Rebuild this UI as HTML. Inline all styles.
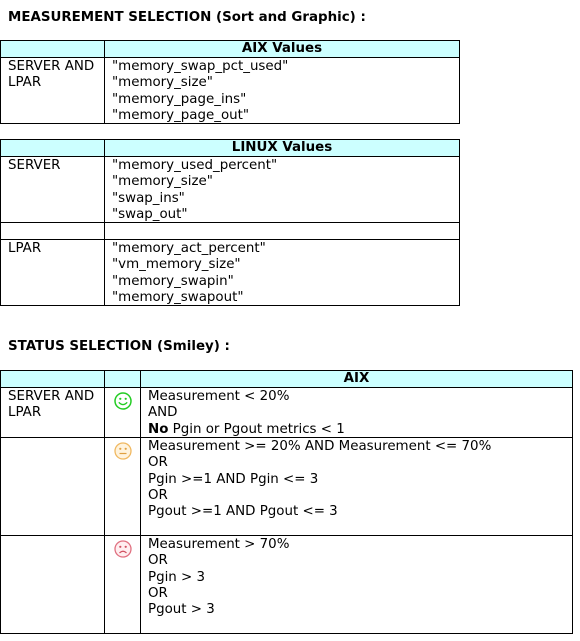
<!DOCTYPE html><html><head><meta charset="utf-8"><style>
body{margin:0;background:#fff;font-family:"DejaVu Sans","Liberation Sans",sans-serif;font-size:13.4px;color:#000;position:relative;width:580px;height:641px;overflow:hidden}
.t{position:absolute;font-weight:bold;font-size:13.4px}
table{position:absolute;border-collapse:collapse;table-layout:fixed}
td{border:1px solid #000;vertical-align:top;padding:0 0 0 7px;line-height:16.25px;white-space:nowrap;overflow:hidden}
td div{position:relative;top:1px}
tr.h td{background:#ccffff;font-weight:bold;text-align:center;height:16px;line-height:16px;padding:0}
svg{display:block;margin:3px 0 0 4px}
</style></head><body>
<div class="t" style="left:8px;top:10px">MEASUREMENT SELECTION (Sort and Graphic) :</div>
<table style="left:0;top:40px;width:460px">
<col style="width:104px"><col>
<tr class="h"><td></td><td>AIX Values</td></tr>
<tr><td style="height:64px"><div>SERVER AND<br>LPAR</div></td><td><div>"memory_swap_pct_used"<br>"memory_size"<br>"memory_page_ins"<br>"memory_page_out"</div></td></tr>
</table>
<table style="left:0;top:139px;width:460px">
<col style="width:104px"><col>
<tr class="h"><td></td><td>LINUX Values</td></tr>
<tr><td style="height:64px"><div>SERVER</div></td><td><div>"memory_used_percent"<br>"memory_size"<br>"swap_ins"<br>"swap_out"</div></td></tr>
<tr><td style="height:16px"></td><td></td></tr>
<tr><td style="height:64px"><div>LPAR</div></td><td><div>"memory_act_percent"<br>"vm_memory_size"<br>"memory_swapin"<br>"memory_swapout"</div></td></tr>
</table>
<div class="t" style="left:8px;top:339px">STATUS SELECTION (Smiley) :</div>
<table style="left:0;top:370px;width:573px">
<col style="width:104px"><col style="width:36px"><col>
<tr class="h"><td></td><td></td><td>AIX</td></tr>
<tr><td style="height:49px"><div>SERVER AND<br>LPAR</div></td><td style="padding:0"><svg width="30" height="22" viewBox="0 0 30 22"><circle cx="14" cy="10" r="8" fill="none" stroke="#22cc22" stroke-width="1.5"/><circle cx="11.3" cy="7.8" r="1.1" fill="#22cc22"/><circle cx="16.7" cy="7.8" r="1.1" fill="#22cc22"/><path d="M9.8 11.3 Q14 15.8 18.2 11.3" fill="none" stroke="#22cc22" stroke-width="1.4"/></svg></td><td><div>Measurement &lt; 20%<br>AND<br><b>No</b> Pgin or Pgout metrics &lt; 1</div></td></tr>
<tr><td style="height:97px"></td><td style="padding:0"><svg width="30" height="22" viewBox="0 0 30 22"><circle cx="14" cy="10" r="8" fill="#fff3dd" stroke="#f0b860" stroke-width="1.3"/><circle cx="11.3" cy="7.8" r="1.1" fill="#e0a040"/><circle cx="16.7" cy="7.8" r="1.1" fill="#e0a040"/><path d="M10.5 12.5 H17.5" stroke="#e0a040" stroke-width="1.2"/></svg></td><td><div>Measurement &gt;= 20% AND Measurement &lt;= 70%<br>OR<br>Pgin &gt;=1 AND Pgin &lt;= 3<br>OR<br>Pgout &gt;=1 AND Pgout &lt;= 3</div></td></tr>
<tr><td style="height:97px"></td><td style="padding:0"><svg width="30" height="22" viewBox="0 0 30 22"><circle cx="14" cy="10" r="8" fill="#ffeef0" stroke="#e07080" stroke-width="1.3"/><circle cx="11.3" cy="7.8" r="1.1" fill="#d05060"/><circle cx="16.7" cy="7.8" r="1.1" fill="#d05060"/><path d="M10.5 14 Q14 10.5 17.5 14" fill="none" stroke="#d05060" stroke-width="1.2"/></svg></td><td><div>Measurement &gt; 70%<br>OR<br>Pgin &gt; 3<br>OR<br>Pgout &gt; 3</div></td></tr>
</table>
</body></html>
